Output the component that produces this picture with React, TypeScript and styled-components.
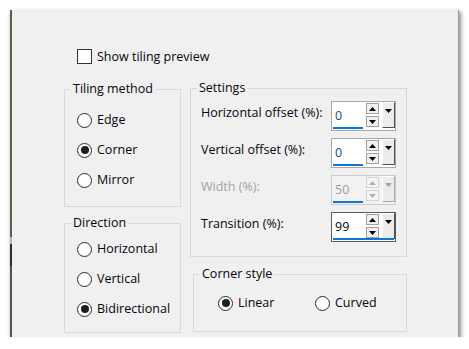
import React from 'react';
import styled, { createGlobalStyle } from 'styled-components';

const GlobalStyle = createGlobalStyle`
  html, body { margin: 0; padding: 0; background: #ffffff; }
  body {
    font-family: "Open Sans", "Noto Sans", sans-serif;
    font-size: 12.5px;
    color: #05050d;
  }
  * { box-sizing: border-box; }
`;

const Page = styled.div`
  padding: 10px 0 0 10px;
`;

const Dialog = styled.div`
  position: relative;
  width: 448px;
  height: 327px;
  padding: 39px 0 0 52px;
  background: #f0f0f0;
  border-left: 2px solid #625d46;
  box-shadow: 1px 0 0 #9a9a9a, 2px 3px 4px 1px rgba(0, 0, 0, 0.45);
`;

/* piece of the picture behind the dialog that shows along its left edge */
const EdgeStrip = styled.span`
  position: absolute;
  left: -2px;
  top: 227px;
  width: 2px;
  height: 100px;
  background: linear-gradient(
    to bottom,
    #a9b8c6 0px, #a9b8c6 7px,
    #2e2e2c 7px, #2e2e2c 29px,
    #57534a 29px, #57534a 100%
  );
`;

const CheckRow = styled.label`
  display: flex;
  align-items: center;
  gap: 5px;
  height: 15px;
  margin-left: 13px;
  line-height: 16px;
`;

const CheckBox = styled.span`
  width: 15px;
  height: 15px;
  border: 1px solid #333;
  background: #fff;
  flex: none;
`;

const Columns = styled.div`
  display: flex;
  align-items: flex-start;
  gap: 9px;
  margin-top: 25px;
`;

const Column = styled.div<{ $w: number }>`
  width: ${(p) => p.$w}px;
  display: flex;
  flex-direction: column;
`;

const Group = styled.div<{ $pad: string; $mt?: number; $ml?: number }>`
  position: relative;
  border: 1px solid #d9d9d9;
  padding: ${(p) => p.$pad};
  margin-top: ${(p) => p.$mt ?? 0}px;
  margin-left: ${(p) => p.$ml ?? 0}px;
`;

const Legend = styled.span`
  position: absolute;
  top: -9px;
  left: 6px;
  padding: 0 2px;
  line-height: 16px;
  background: #f0f0f0;
  white-space: nowrap;
`;

const RadioRow = styled.label<{ $w?: number }>`
  display: flex;
  align-items: center;
  gap: 5px;
  height: 30px;
  line-height: 16px;
  width: ${(p) => (p.$w ? `${p.$w}px` : 'auto')};
`;

const RadioCircle = styled.span<{ $on?: boolean }>`
  width: 15px;
  height: 15px;
  border-radius: 50%;
  border: 1px solid #2a2a2a;
  background: #fff;
  flex: none;
  display: flex;
  align-items: center;
  justify-content: center;
  &::after {
    content: '';
    width: 8px;
    height: 8px;
    border-radius: 50%;
    background: ${(p) => (p.$on ? '#1e1e1e' : 'transparent')};
  }
`;

const InlineRadios = styled.div`
  display: flex;
  align-items: center;
`;

const SettingsGrid = styled.div`
  display: grid;
  grid-template-columns: 130px 65px;
  grid-auto-rows: 30px;
  row-gap: 7px;
`;

const FieldLabel = styled.span<{ $disabled?: boolean }>`
  padding-top: 4px;
  line-height: 16px;
  white-space: nowrap;
  color: ${(p) => (p.$disabled ? '#a3a3a3' : 'inherit')};
`;

const SpinBox = styled.div<{ $disabled?: boolean; $focus?: boolean }>`
  width: 65px;
  height: 30px;
  border: 1px solid
    ${(p) => (p.$focus ? '#5c5c5c' : p.$disabled ? '#cccccc' : '#a8a8a8')};
  background: ${(p) => (p.$disabled ? '#f2f2f2' : '#ffffff')};
  display: flex;
  flex-direction: column;
`;

const SpinRow = styled.div`
  display: flex;
  height: 25px;
`;

const SpinValue = styled.span<{ $disabled?: boolean; $tone?: string }>`
  width: 34px;
  padding: 3px 0 0 3px;
  display: flex;
  align-items: center;
  line-height: 16px;
  color: ${(p) => (p.$disabled ? '#9c9c9c' : p.$tone ?? '#05050d')};
`;

const Steppers = styled.div`
  width: 13px;
  display: flex;
  flex-direction: column;
  gap: 2px;
  padding-top: 1px;
`;

const StepButton = styled.span<{ $disabled?: boolean }>`
  height: 11px;
  border: 1px solid ${(p) => (p.$disabled ? '#d4d4d4' : '#a0a0a0')};
  background: ${(p) => (p.$disabled ? '#f4f4f4' : '#f0f0f0')};
  display: flex;
  align-items: center;
  justify-content: center;
`;

const DropButton = styled.span<{ $disabled?: boolean }>`
  width: 13px;
  height: 26px;
  margin-left: 3px;
  border-top: 1px solid #ffffff;
  border-left: 1px solid #ffffff;
  border-right: 1px solid ${(p) => (p.$disabled ? '#a8a8a8' : '#505050')};
  border-bottom: 1px solid ${(p) => (p.$disabled ? '#a8a8a8' : '#505050')};
  background: #ececec;
  display: flex;
  justify-content: center;
  padding-top: 6px;
`;

const Underline = styled.span<{ $full?: boolean }>`
  display: block;
  height: 2px;
  margin-left: 1px;
  width: ${(p) => (p.$full ? '61px' : '30px')};
  background: #0a78d4;
`;

const Tri = ({ dir, color }: { dir: 'up' | 'down'; color: string }) => (
  <svg width="7" height="4" viewBox="0 0 7 4" style={{ display: 'block' }}>
    <polygon
      points={dir === 'up' ? '3.5,0 7,4 0,4' : '0,0 7,0 3.5,4'}
      fill={color}
    />
  </svg>
);

type SpinProps = {
  value: string;
  disabled?: boolean;
  focus?: boolean;
  tone?: string;
};

const Spin = ({ value, disabled, focus, tone }: SpinProps) => {
  const c = disabled ? '#b0b0b0' : '#000';
  return (
    <SpinBox $disabled={disabled} $focus={focus}>
      <SpinRow>
        <SpinValue $disabled={disabled} $tone={tone}>
          {value}
        </SpinValue>
        <Steppers>
          <StepButton $disabled={disabled}>
            <Tri dir="up" color={c} />
          </StepButton>
          <StepButton $disabled={disabled}>
            <Tri dir="down" color={c} />
          </StepButton>
        </Steppers>
        <DropButton $disabled={disabled}>
          <Tri dir="down" color={disabled ? '#a0a0a0' : '#000'} />
        </DropButton>
      </SpinRow>
      <Underline $full={focus} />
    </SpinBox>
  );
};

const Radio = ({ label, on, w }: { label: string; on?: boolean; w?: number }) => (
  <RadioRow $w={w}>
    <RadioCircle $on={on} />
    <span>{label}</span>
  </RadioRow>
);

export default function App() {
  return (
    <>
      <GlobalStyle />
      <Page>
        <Dialog>
          <EdgeStrip />
          <CheckRow>
            <CheckBox />
            <span>Show tiling preview</span>
          </CheckRow>
          <Columns>
            <Column $w={117}>
              <Group $pad="15px 0 11px 12px">
                <Legend>Tiling method</Legend>
                <Radio label="Edge" />
                <Radio label="Corner" on />
                <Radio label="Mirror" />
              </Group>
              <Group $pad="10px 0 8px 12px" $mt={16}>
                <Legend>Direction</Legend>
                <Radio label="Horizontal" />
                <Radio label="Vertical" />
                <Radio label="Bidirectional" on />
              </Group>
            </Column>
            <Column $w={217}>
              <Group $pad="12px 10px 14px 10px" $mt={-1}>
                <Legend>Settings</Legend>
                <SettingsGrid>
                  <FieldLabel>Horizontal offset (%):</FieldLabel>
                  <Spin value="0" tone="#1d4680" />
                  <FieldLabel>Vertical offset (%):</FieldLabel>
                  <Spin value="0" tone="#1d4680" />
                  <FieldLabel $disabled>Width (%):</FieldLabel>
                  <Spin value="50" disabled />
                  <FieldLabel>Transition (%):</FieldLabel>
                  <Spin value="99" focus />
                </SettingsGrid>
              </Group>
              <Group $pad="13px 0 13px 24px" $mt={17} $ml={3}>
                <Legend>Corner style</Legend>
                <InlineRadios>
                  <Radio label="Linear" on w={97} />
                  <Radio label="Curved" />
                </InlineRadios>
              </Group>
            </Column>
          </Columns>
        </Dialog>
      </Page>
    </>
  );
}
